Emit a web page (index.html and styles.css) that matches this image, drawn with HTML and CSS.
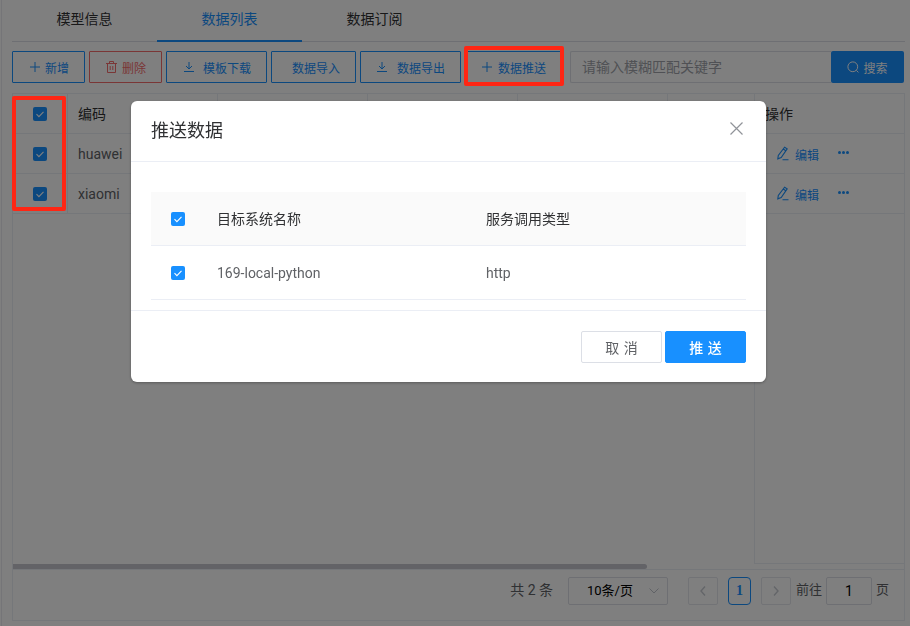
FILE: index.html
```html
<!DOCTYPE html>
<html lang="zh-CN">
<head>
<meta charset="utf-8">
<title>数据推送</title>
<link rel="stylesheet" href="styles.css">
</head>
<body>
<div class="app">
  <nav class="tabs">
    <a class="tab">模型信息</a>
    <a class="tab tab-active">数据列表</a>
    <a class="tab">数据订阅</a>
  </nav>
  <div class="toolbar">
    <button class="btn btn-add"><svg class="ico" viewBox="0 0 10 10"><path d="M5 0v10M0 5h10"/></svg>新增</button>
    <button class="btn btn-danger"><svg class="ico ico-trash" viewBox="0 0 11 12"><path d="M0 2.5h11M3.5 2.5V.5h4v2M1.5 2.5v9h8v-9M4.2 5v4M6.8 5v4"/></svg>删除</button>
    <button class="btn btn-dl"><svg class="ico" viewBox="0 0 10 10"><path d="M5 0v6.5M2 4l3 3 3-3M0 9.5h10"/></svg>模板下载</button>
    <button class="btn btn-plain">数据导入</button>
    <button class="btn btn-dl btn-export"><svg class="ico" viewBox="0 0 10 10"><path d="M5 0v6.5M2 4l3 3 3-3M0 9.5h10"/></svg>数据导出</button>
    <button class="btn btn-push"><svg class="ico" viewBox="0 0 10 10"><path d="M5 0v10M0 5h10"/></svg>数据推送</button>
    <div class="search">
      <input class="search-input" placeholder="请输入模糊匹配关键字">
      <button class="search-btn"><svg class="ico-search" viewBox="0 0 12 12"><circle cx="5.8" cy="5.8" r="4.9"/><path d="M9.4 9.4l2 2"/></svg>搜索</button>
    </div>
  </div>
  <section class="grid">
    <div class="grid-area">
      <div class="grid-main">
        <div class="row">
          <div class="cell cell-check"><span class="check"><svg viewBox="0 0 14 14"><path d="M3.5 7.2l2.4 2.4 4.6-4.8"/></svg></span></div>
          <div class="cell cell-text">编码</div>
          <div class="cell"></div><div class="cell"></div><div class="cell"></div><div class="cell cell-last"></div>
        </div>
        <div class="row row-body">
          <div class="cell cell-check"><span class="check"><svg viewBox="0 0 14 14"><path d="M3.5 7.2l2.4 2.4 4.6-4.8"/></svg></span></div>
          <div class="cell cell-text cell-val">huawei</div>
        </div>
        <div class="row row-body">
          <div class="cell cell-check"><span class="check"><svg viewBox="0 0 14 14"><path d="M3.5 7.2l2.4 2.4 4.6-4.8"/></svg></span></div>
          <div class="cell cell-text cell-val">xiaomi</div>
        </div>
      </div>
      <div class="grid-fixed">
        <div class="fixed-row fixed-head">操作</div>
        <div class="fixed-row">
          <a class="link"><svg class="ico-edit" viewBox="0 0 13 15"><path d="M8.6 1.2l2.6 1.7-6 8.6-3.4 1.3.5-3.4zM7.2 3l2.6 1.8M6.5 13.8h6"/></svg>编辑</a>
          <span class="dots"><i></i><i></i><i></i></span>
        </div>
        <div class="fixed-row">
          <a class="link"><svg class="ico-edit" viewBox="0 0 13 15"><path d="M8.6 1.2l2.6 1.7-6 8.6-3.4 1.3.5-3.4zM7.2 3l2.6 1.8M6.5 13.8h6"/></svg>编辑</a>
          <span class="dots"><i></i><i></i><i></i></span>
        </div>
      </div>
    </div>
    <div class="scroll-track"><div class="scroll-thumb"></div></div>
    <footer class="pager">
      <span class="pg-total">共 2 条</span>
      <div class="pg-size">10条/页<svg class="pg-caret" viewBox="0 0 10 6"><path d="M.5.5L5 5 9.5.5"/></svg></div>
      <button class="pg-nav"><svg viewBox="0 0 6 10"><path d="M5 .5L1 5l4 4.5"/></svg></button>
      <span class="pg-num">1</span>
      <button class="pg-nav pg-next"><svg viewBox="0 0 6 10"><path d="M1 .5L5 5 1 9.5"/></svg></button>
      <span class="pg-label">前往</span>
      <span class="pg-jump">1</span>
      <span class="pg-label pg-unit">页</span>
    </footer>
  </section>
</div>

<div class="mask">
  <div class="dialog">
    <header class="dlg-head">
      <h2 class="dlg-title">推送数据</h2>
      <svg class="dlg-close" viewBox="0 0 13 13"><path d="M.5.5l12 12M12.5.5l-12 12"/></svg>
    </header>
    <div class="dlg-body">
      <div class="dlg-row dlg-row-head">
        <span class="dlg-check"><span class="check"><svg viewBox="0 0 14 14"><path d="M3.5 7.2l2.4 2.4 4.6-4.8"/></svg></span></span>
        <span class="dlg-name">目标系统名称</span>
        <span class="dlg-type">服务调用类型</span>
      </div>
      <div class="dlg-row">
        <span class="dlg-check"><span class="check"><svg viewBox="0 0 14 14"><path d="M3.5 7.2l2.4 2.4 4.6-4.8"/></svg></span></span>
        <span class="dlg-name">169-local-python</span>
        <span class="dlg-type">http</span>
      </div>
    </div>
    <footer class="dlg-foot">
      <button class="dlg-btn">取 消</button>
      <button class="dlg-btn dlg-btn-primary">推 送</button>
    </footer>
  </div>
</div>

<div class="mark mark-checks"></div>
<div class="mark mark-push"></div>
</body>
</html>
```
FILE: styles.css
```css
* { box-sizing: border-box; }
html, body { margin: 0; height: 100%; }
body {
  width: 910px;
  height: 626px;
  overflow: hidden;
  background: #fff;
  color: #606266;
  font: 14px/1.4 Roboto, "Noto Sans CJK SC", sans-serif;
}
button, input { font-family: inherit; margin: 0; }

.app {
  height: 626px;
  margin-left: 1px;
  padding: 0 5px 5px 10px;
  border-left: 1px solid #ebebf0;
  display: flex;
  flex-direction: column;
}

/* tabs */
.tabs { display: flex; height: 42px; border-bottom: 1px solid #dcdfe6; flex: none; }
.tab {
  width: 145px;
  height: 42px;
  line-height: 38px;
  text-align: center;
  color: #303133;
}
.tab-active { color: #1890ff; border-bottom: 2px solid #1890ff; }

/* toolbar */
.toolbar { display: flex; gap: 4px; margin: 9px 1px 0 0; height: 32px; flex: none; }
.btn {
  height: 32px;
  display: flex;
  align-items: center;
  gap: 5px;
  padding: 0 15px 0 17px;
  border: 1px solid #1890ff;
  border-radius: 1px;
  background: #fff;
  color: #1890ff;
  font-size: 12px;
  white-space: nowrap;
}
.ico { width: 10px; height: 10px; flex: none; fill: none; stroke: currentColor; stroke-width: 1; }
.ico-trash { width: 11px; height: 12px; }
.btn-danger { padding-left: 16px; border-color: #f56c6c; color: #f56c6c; }
.btn-dl { gap: 9px; }
.btn-export { gap: 10px; padding-left: 16px; }
.btn-plain { padding-left: 20px; }
.btn-push { gap: 6px; padding-left: 16px; }

.search { display: flex; flex: 1; margin-left: 4px; min-width: 0; }
.search-input {
  flex: 1;
  min-width: 0;
  height: 32px;
  padding: 0 11px;
  border: 1px solid #dcdfe6;
  border-right: 0;
  border-radius: 2px 0 0 2px;
  font-size: 14px;
  color: #606266;
  outline: none;
}
.search-input::placeholder { color: #a0a3aa; opacity: 1; }
.search-btn {
  width: 73px;
  height: 32px;
  display: flex;
  align-items: center;
  justify-content: center;
  gap: 4px;
  border: 0;
  border-radius: 2px;
  background: #1890ff;
  color: #fff;
  font-size: 12px;
}
.ico-search { width: 12px; height: 12px; fill: none; stroke: currentColor; stroke-width: 1; }

/* table */
.grid {
  flex: 1;
  margin-top: 10px;
  display: flex;
  flex-direction: column;
  border: 1px solid #ebeef5;
  min-height: 0;
}
.grid-area { display: flex; height: 470px; flex: none; }
.grid-main { flex: 1; min-width: 0; }
.row {
  display: grid;
  grid-template-columns: 55px 150px 150px 150px 150px 1fr;
  height: 40px;
  border-bottom: 1px solid #ebeef5;
}
.cell { display: flex; align-items: center; border-right: 1px solid #ebeef5; }
.row-body .cell-text { border-right: 0; }
.cell-last { border-right: 0; }
.cell-check { justify-content: center; padding-right: 1px; }
.cell-text { padding: 2px 0 0 10px; color: #303133; }
.cell-val { color: #606266; }

.check {
  display: block;
  width: 14px;
  height: 14px;
  border-radius: 2px;
  background: #1890ff;
}
.check svg { display: block; width: 14px; height: 14px; fill: none; stroke: #fff; stroke-width: 1.1; }

.grid-fixed { width: 150px; flex: none; border-left: 1px solid #ebeef5; border-bottom: 1px solid #ebeef5; }
.fixed-row {
  display: flex;
  align-items: center;
  height: 40px;
  padding-left: 21px;
  border-bottom: 1px solid #ebeef5;
}
.fixed-head { padding: 2px 0 0 10px; color: #303133; }
.link { display: flex; align-items: center; gap: 6px; color: #1890ff; font-size: 12px; padding-top: 6px; }
.ico-edit { width: 13px; height: 15px; fill: none; stroke: currentColor; stroke-width: 1.1; margin-top: -6px; }
.dots { display: flex; gap: 1px; margin-left: 19px; margin-top: -2px; }
.dots i { width: 3px; height: 3px; border-radius: 50%; background: #1890ff; }

.scroll-track { height: 5px; flex: none; }
.scroll-thumb { width: 634px; height: 5px; border-radius: 0 3px 3px 0; background: #c6c6ce; }

/* pagination */
.pager {
  flex: 1;
  display: flex;
  align-items: center;
  justify-content: flex-end;
  padding: 0 15px 9px 0;
  border-top: 1px solid #ebeef5;
  color: #606266;
  font-size: 14px;
}
.pg-total { margin-right: 15px; }
.pg-size {
  position: relative;
  width: 100px;
  height: 28px;
  line-height: 26px;
  padding-left: 18px;
  border: 1px solid #dcdfe6;
  border-radius: 2px;
  color: #000;
  font-size: 13px;
  margin-right: 20px;
}
.pg-caret {
  position: absolute;
  right: 8px;
  top: 10px;
  width: 10px;
  height: 6px;
  fill: none;
  stroke: #c0c4cc;
}
.pg-nav {
  width: 30px;
  height: 28px;
  padding: 0;
  display: flex;
  align-items: center;
  justify-content: center;
  border: 1px solid #e4e7ed;
  border-radius: 2px;
  background: #fff;
}
.pg-nav svg { width: 6px; height: 10px; fill: none; stroke: #c8cbd2; stroke-width: 1.4; }
.pg-num {
  width: 23px;
  height: 28px;
  margin: 0 10px;
  text-align: center;
  border: 1px solid #1890ff;
  border-radius: 4px;
  color: #1890ff;
  font: bold 14px/26px "Liberation Serif", serif;
}
.pg-next { margin-right: 5px; }
.pg-label { width: 26px; font-size: 13px; }
.pg-jump {
  width: 46px;
  height: 28px;
  margin: 0 4px;
  line-height: 26px;
  text-align: center;
  border: 1px solid #dcdfe6;
  border-radius: 2px;
  color: #000;
}
.pg-unit { width: 13px; }

/* dialog */
.mask {
  position: fixed;
  inset: 0;
  padding: 101px 0 0 131px;
  background: rgba(0, 0, 0, .5);
}
.dialog {
  width: 635px;
  height: 281px;
  background: #fff;
  border-radius: 6px;
  box-shadow: 0 1px 3px rgba(0, 0, 0, .3);
}
.dlg-head {
  position: relative;
  height: 61px;
  padding: 0 20px;
  display: flex;
  align-items: center;
  border-bottom: 1px solid #ebeef5;
}
.dlg-title { margin: 0; font-size: 18px; font-weight: 400; color: #303133; padding-bottom: 1px; }
.dlg-close {
  position: absolute;
  right: 23px;
  top: 21px;
  width: 13px;
  height: 13px;
  fill: none;
  stroke: #909399;
  stroke-width: 1.2;
}
.dlg-body { padding: 30px 20px 10px; height: 149px; border-bottom: 1px solid #ebeef5; }
.dlg-row {
  display: flex;
  align-items: center;
  height: 54px;
  border-bottom: 1px solid #ebeef5;
  color: #606266;
}
.dlg-row-head { background: #fafafa; color: #303133; }
.dlg-check { width: 66px; padding-left: 20px; }
.dlg-name { width: 269px; padding-top: 2px; }
.dlg-type { padding-top: 2px; }
.dlg-foot { display: flex; justify-content: flex-end; gap: 3px; padding: 20px; }
.dlg-btn {
  width: 81px;
  height: 32px;
  border: 1px solid #dcdfe6;
  border-radius: 2px;
  background: #fff;
  color: #606266;
  font-size: 14px;
  word-spacing: 1px;
}
.dlg-btn-primary { background: #1890ff; border-color: #1890ff; color: #fff; font-weight: 500; }

/* annotation boxes */
.mark { position: fixed; border: 4px solid #ff2614; border-radius: 2px; }
.mark-checks { left: 12px; top: 96px; width: 54px; height: 115px; }
.mark-push { left: 464px; top: 46px; width: 100px; height: 40px; }
```
